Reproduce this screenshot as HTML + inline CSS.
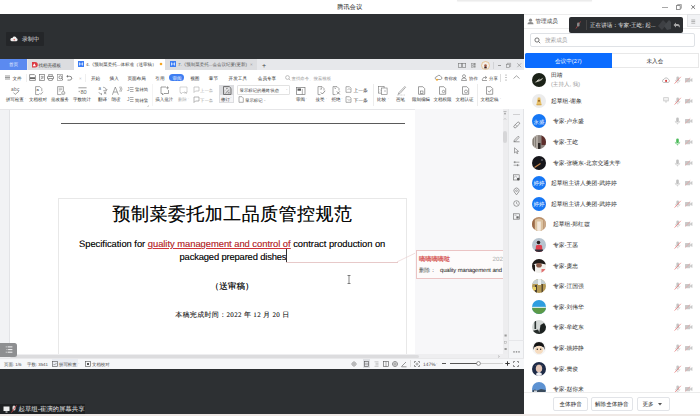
<!DOCTYPE html><html><head><meta charset="utf-8"><style>
*{margin:0;padding:0;box-sizing:border-box}
html,body{width:700px;height:416px;overflow:hidden;background:#fff;font-family:"Liberation Sans",sans-serif}
.ab{position:absolute}
.t{position:absolute;white-space:nowrap;line-height:1;font-weight:500;text-rendering:geometricPrecision}
svg{overflow:visible}
</style></head><body>
<div class="ab" style="left:0px;top:0px;width:700px;height:14px;background:#fff"></div>
<div class="t" style="left:337px;top:5px;font-size:6.3px;height:6.3px;color:#222;">腾讯会议</div>
<div class="ab" style="left:457px;top:0px;width:135px;height:1px;background:#ececec;box-shadow:0 0.6px 1.2px rgba(0,0,0,0.10)"></div>
<div class="ab" style="left:662px;top:6.5px;width:6px;height:0.9px;background:#a8a8a8"></div>
<svg class="ab" style="left:675.8px;top:4px;" width="6" height="6" viewBox="0 0 6 6"><rect x="0.4" y="1.6" width="3.8" height="3.8" fill="none" stroke="#777" stroke-width="0.8"/><path d="M1.6 1.6V0.5H5.4V4.3H4.2" fill="none" stroke="#888" stroke-width="0.7"/></svg>
<svg class="ab" style="left:691px;top:4.7px;" width="4.4" height="4.2" viewBox="0 0 4.4 4.2"><path d="M0.3 0.3L4.1 3.9M4.1 0.3L0.3 3.9" stroke="#555" stroke-width="0.8"/></svg>
<div class="ab" style="left:0px;top:14px;width:524px;height:402px;background:#2d3033"></div>
<div class="ab" style="left:6px;top:32px;width:38px;height:14px;background:#242629;border-radius:1px"></div>
<svg class="ab" style="left:9.5px;top:35px;" width="8" height="7" viewBox="0 0 8 7"><path d="M1.6 6.2H6.4A1.5 1.5 0 0 0 6.6 3.3A2.2 2.2 0 0 0 2.4 3A1.6 1.6 0 0 0 1.6 6.2Z" fill="#f0eeee"/><circle cx="4.3" cy="4.6" r="0.85" fill="#e07878"/></svg>
<div class="t" style="left:22px;top:38px;font-size:5.8px;height:5.8px;color:#e4e4e4;">录制中</div>
<div class="ab" style="left:0px;top:59px;width:524px;height:310px;background:#fff"></div>
<div class="ab" style="left:0px;top:59px;width:524px;height:11px;background:#e7e8eb"></div>
<div class="ab" style="left:0px;top:59px;width:27px;height:11px;background:#5b8af0"></div>
<div class="t" style="left:9px;top:63px;font-size:4.6px;height:4.6px;color:#e8eeff;">首页</div>
<div class="ab" style="left:28px;top:59px;width:46px;height:11px;background:#dcdde0"></div>
<svg class="ab" style="left:31.6px;top:62.4px;" width="6" height="5.6" viewBox="0 0 6 5.6"><path d="M0 0H3A2.8 2.8 0 0 1 3 5.6H0Z" fill="#dc3a42"/><path d="M2.3 1.3L3.9 4.3H0.7Z" fill="#fff"/></svg>
<div class="t" style="left:38.5px;top:64px;font-size:4.5px;height:4.5px;color:#333;">找稻壳模板</div>
<div class="ab" style="left:74px;top:59px;width:91px;height:11px;background:#fff"></div>
<svg class="ab" style="left:78px;top:61px;" width="6" height="6" viewBox="0 0 6 6"><rect width="6" height="6" fill="#3d7ef5"/><path d="M1.5 1.5V4.5M4.5 1.5V4.5M1.5 3H4.5" stroke="#fff" stroke-width="0.7"/></svg>
<div class="t" style="left:86px;top:63px;font-size:4.5px;height:4.5px;color:#333;">4.《预制菜委托...体标准（送审稿）</div>
<svg class="ab" style="left:159px;top:62px;" width="4" height="4" viewBox="0 0 4 4"><circle cx="2" cy="2" r="1.3" fill="#f5a623"/></svg>
<div class="ab" style="left:165px;top:59px;width:92px;height:11px;background:#dcdde0"></div>
<svg class="ab" style="left:170px;top:61px;" width="6" height="6" viewBox="0 0 6 6"><rect width="6" height="6" fill="#3d7ef5"/><path d="M1.5 1.5V4.5M4.5 1.5V4.5M1.5 3H4.5" stroke="#fff" stroke-width="0.7"/></svg>
<div class="t" style="left:178px;top:63px;font-size:4.5px;height:4.5px;color:#555;">7.《预制菜委托...会会议纪要(更新)</div>
<div class="t" style="left:250px;top:63px;font-size:4.5px;height:4.5px;color:#999;">×</div>
<div class="t" style="left:262px;top:63px;font-size:7px;height:7px;color:#444;">+</div>
<svg class="ab" style="left:457.5px;top:62.8px;" width="8" height="5" viewBox="0 0 8 5"><rect x="0.3" y="0.3" width="3.4" height="4.2" fill="none" stroke="#777" stroke-width="0.6"/><rect x="4.3" y="0.3" width="3.4" height="4.2" fill="none" stroke="#777" stroke-width="0.6"/></svg>
<svg class="ab" style="left:470.8px;top:62.8px;" width="5" height="5" viewBox="0 0 5 5"><rect x="0.3" y="0.3" width="1.8" height="1.8" fill="none" stroke="#888" stroke-width="0.5"/><rect x="2.9" y="0.3" width="1.8" height="1.8" fill="none" stroke="#888" stroke-width="0.5"/><rect x="0.3" y="2.9" width="1.8" height="1.8" fill="none" stroke="#888" stroke-width="0.5"/><rect x="2.9" y="2.9" width="1.8" height="1.8" fill="none" stroke="#888" stroke-width="0.5"/></svg>
<svg class="ab" style="left:480.5px;top:60.5px;" width="9" height="9" viewBox="0 0 9 9"><circle cx="4.5" cy="4.5" r="4" fill="#f4efe9" stroke="#e2b476" stroke-width="0.7"/><circle cx="4.5" cy="4.6" r="1.3" fill="#a86048"/><rect x="3.3" y="5.6" width="2.4" height="1.8" fill="#3a2020"/></svg>
<div class="ab" style="left:493px;top:61.5px;width:0.5px;height:7px;background:#d2d3d6"></div>
<div class="ab" style="left:497.5px;top:64.8px;width:3px;height:0.6px;background:#999"></div>
<svg class="ab" style="left:506px;top:62.5px;" width="5" height="5" viewBox="0 0 5 5"><rect x="0.3" y="1.3" width="3.2" height="3.2" fill="none" stroke="#888" stroke-width="0.6"/><path d="M1.3 1.3V0.3H4.6V3.6H3.5" fill="none" stroke="#888" stroke-width="0.6"/></svg>
<svg class="ab" style="left:516.8px;top:62.6px;" width="4.5" height="4.5" viewBox="0 0 4.5 4.5"><path d="M0.3 0.3L4.2 4.2M4.2 0.3L0.3 4.2" stroke="#888" stroke-width="0.6"/></svg>
<svg class="ab" style="left:5px;top:75px;" width="5" height="5" viewBox="0 0 5 5"><path d="M0 1H5M0 2.5H5M0 4H5" stroke="#555" stroke-width="0.6"/></svg>
<div class="t" style="left:12.5px;top:77px;font-size:4.6px;height:4.6px;color:#222;">文件</div>
<div class="ab" style="left:25.5px;top:73.5px;width:0.5px;height:8px;background:#efefef"></div>
<svg class="ab" style="left:28.8px;top:74px;" width="7" height="7" viewBox="0 0 7 7"><path d="M0.6 0.6H5.4L6.4 1.6V6.4H0.6Z" fill="none" stroke="#666" stroke-width="0.7"/><rect x="1" y="3.3" width="5" height="1.6" fill="#555"/></svg>
<svg class="ab" style="left:38.5px;top:74px;" width="7" height="7" viewBox="0 0 7 7"><rect x="0.6" y="0.6" width="5" height="5.8" fill="none" stroke="#777" stroke-width="0.7"/><path d="M1.8 2.4H4.5M1.8 4H4.5" stroke="#666" stroke-width="0.6"/><path d="M1.5 5.5L4.5 3" stroke="#666" stroke-width="0.5"/></svg>
<svg class="ab" style="left:46.8px;top:74px;" width="7" height="7" viewBox="0 0 7 7"><rect x="0.5" y="2.3" width="6" height="2.8" rx="0.8" fill="none" stroke="#666" stroke-width="0.8"/><rect x="1.8" y="0.6" width="3.4" height="1.7" fill="none" stroke="#777" stroke-width="0.6"/><rect x="1.8" y="4.5" width="3.4" height="2" fill="#fff" stroke="#666" stroke-width="0.6"/></svg>
<svg class="ab" style="left:56.5px;top:74px;" width="7" height="7" viewBox="0 0 7 7"><rect x="0.6" y="0.6" width="4.8" height="5.8" fill="none" stroke="#888" stroke-width="0.6"/><circle cx="3.4" cy="3.3" r="1.5" fill="none" stroke="#555" stroke-width="0.6"/><path d="M4.4 4.4L5.8 5.8" stroke="#555" stroke-width="0.6"/></svg>
<svg class="ab" style="left:65.5px;top:74px;" width="7" height="7" viewBox="0 0 7 7"><path d="M1.2 2.3H3.8A1.9 1.9 0 0 1 3.8 6.1H1.5" fill="none" stroke="#666" stroke-width="0.75"/><path d="M0.3 2.3L1.9 0.9V3.7Z" fill="#666"/></svg>
<div class="t" style="left:72px;top:77px;font-size:4.6px;height:4.6px;color:#888;">·</div>
<div class="t" style="left:79px;top:77px;font-size:4.6px;height:4.6px;color:#bbb;">×</div>
<div class="ab" style="left:85px;top:73.5px;width:0.5px;height:8px;background:#efefef"></div>
<div class="t" style="left:91px;top:77px;font-size:4.6px;height:4.6px;color:#222;">开始</div>
<div class="t" style="left:109.6px;top:77px;font-size:4.6px;height:4.6px;color:#222;">插入</div>
<div class="t" style="left:127.4px;top:77px;font-size:4.6px;height:4.6px;color:#222;">页面布局</div>
<div class="t" style="left:155.3px;top:77px;font-size:4.6px;height:4.6px;color:#222;">引用</div>
<div class="t" style="left:190.2px;top:77px;font-size:4.6px;height:4.6px;color:#222;">视图</div>
<div class="t" style="left:208.8px;top:77px;font-size:4.6px;height:4.6px;color:#222;">章节</div>
<div class="t" style="left:228.6px;top:77px;font-size:4.6px;height:4.6px;color:#222;">开发工具</div>
<div class="t" style="left:257.8px;top:77px;font-size:4.6px;height:4.6px;color:#222;">会员专享</div>
<div class="ab" style="left:168.6px;top:74px;width:15.8px;height:7.4px;background:#3f7ef2;border-radius:3.7px"></div>
<div class="t" style="left:172.6px;top:77px;font-size:4.5px;height:4.5px;color:#fff;">审阅</div>
<svg class="ab" style="left:285px;top:74.8px;" width="6" height="6" viewBox="0 0 6 6"><circle cx="2.5" cy="2.5" r="1.9" fill="none" stroke="#999" stroke-width="0.6"/><path d="M3.9 3.9L5.3 5.3" stroke="#999" stroke-width="0.6"/></svg>
<div class="t" style="left:291.5px;top:77px;font-size:4.4px;height:4.4px;color:#9a9a9a;">查找命令、搜索模板</div>
<svg class="ab" style="left:435px;top:74px;" width="7" height="7" viewBox="0 0 7 7"><path d="M1.2 5.5H5.8A1.5 1.5 0 0 0 5.8 2.6A2 2 0 0 0 2 2.8A1.4 1.4 0 0 0 1.2 5.5Z" fill="none" stroke="#666" stroke-width="0.6"/><circle cx="2" cy="5.8" r="1" fill="#f5a623"/></svg>
<div class="t" style="left:444px;top:77px;font-size:4.4px;height:4.4px;color:#333;">有你改</div>
<svg class="ab" style="left:461px;top:74px;" width="6" height="7" viewBox="0 0 6 7"><circle cx="3" cy="2.2" r="1.5" fill="none" stroke="#666" stroke-width="0.6"/><path d="M0.5 6.5A2.5 2.5 0 0 1 5.5 6.5Z" fill="none" stroke="#666" stroke-width="0.6"/></svg>
<div class="t" style="left:469px;top:77px;font-size:4.4px;height:4.4px;color:#333;">协作</div>
<svg class="ab" style="left:481px;top:74px;" width="7" height="7" viewBox="0 0 7 7"><path d="M1 6L2.5 3.5H5.5M4 2L5.8 3.5L4 5M1 6.5H6" fill="none" stroke="#666" stroke-width="0.6"/></svg>
<div class="t" style="left:489px;top:77px;font-size:4.4px;height:4.4px;color:#333;">分享</div>
<div class="ab" style="left:500px;top:73.5px;width:0.5px;height:8px;background:#ddd"></div>
<svg class="ab" style="left:505px;top:74px;" width="2" height="7" viewBox="0 0 2 7"><circle cx="1" cy="1" r="0.5" fill="#666"/><circle cx="1" cy="3.5" r="0.5" fill="#666"/><circle cx="1" cy="6" r="0.5" fill="#666"/></svg>
<svg class="ab" style="left:513px;top:75px;" width="7" height="4" viewBox="0 0 7 4"><path d="M0.5 3.5L3.5 0.8L6.5 3.5" fill="none" stroke="#666" stroke-width="0.6"/></svg>
<svg class="ab" style="left:10.5px;top:85.5px;" width="10" height="10" viewBox="0 0 10 10"><text x="0" y="4.6" font-size="4.8" fill="#6a6a6a" font-family="Liberation Sans" textLength="8.5">abc</text><path d="M2.5 6.6L4.2 8.4L8 5.2" fill="none" stroke="#6a6a6a" stroke-width="0.65"/></svg>
<div class="t" style="left:5.800000000000001px;top:98px;font-size:4.5px;height:4.5px;color:#2a2a2a;">拼写检查</div>
<div class="t" style="left:25px;top:98px;font-size:4px;height:4px;color:#999;">˙</div>
<svg class="ab" style="left:34.5px;top:86px;" width="9" height="9.5" viewBox="0 0 9 9.5"><path d="M0.6 0.6H4.8L6.8 2.6V5.2M4.2 8.6H0.6V0.6" fill="none" stroke="#767676" stroke-width="0.65"/><text x="1.6" y="5.3" font-size="4.2" fill="#666" font-family="Liberation Sans" font-weight="bold">a</text><path d="M4.5 7L5.8 8.4L8 5.8" fill="none" stroke="#767676" stroke-width="0.6"/></svg>
<div class="t" style="left:29.0px;top:98px;font-size:4.5px;height:4.5px;color:#2a2a2a;">文档校对</div>
<svg class="ab" style="left:56.5px;top:86px;" width="9" height="9.5" viewBox="0 0 9 9.5"><path d="M0.6 0.6H6.4V5M4.5 8.6H0.6V0.6" fill="none" stroke="#767676" stroke-width="0.65"/><path d="M1.8 2.2H5.2M1.8 3.6H5.2M1.8 5H3.5" stroke="#777" stroke-width="0.5"/><circle cx="6.3" cy="7" r="1.6" fill="none" stroke="#767676" stroke-width="0.6"/><path d="M5.6 7L6.2 7.6L7.1 6.5" fill="none" stroke="#767676" stroke-width="0.45"/></svg>
<div class="t" style="left:51.0px;top:98px;font-size:4.5px;height:4.5px;color:#2a2a2a;">批改服务</div>
<svg class="ab" style="left:77.5px;top:86.5px;" width="9" height="8" viewBox="0 0 9 8"><path d="M0.4 0.8H8.6" stroke="#767676" stroke-width="0.7"/><rect x="0.6" y="3.8" width="1.3" height="1.3" fill="#aaa"/><text x="2.6" y="7.3" font-size="5.6" fill="#6a6a6a" font-family="Liberation Sans" textLength="6">80</text></svg>
<div class="t" style="left:73.0px;top:98px;font-size:4.5px;height:4.5px;color:#2a2a2a;">字数统计</div>
<svg class="ab" style="left:97.5px;top:86px;" width="10" height="9" viewBox="0 0 10 9"><text x="0.5" y="4.3" font-size="4.5" fill="#6a6a6a" font-family="Liberation Sans">a</text><path d="M5 1.2Q7.8 1.2 8.5 3.8M7.4 3.2L8.5 4.2L9.3 3" fill="none" stroke="#767676" stroke-width="0.55"/><path d="M5.2 4.6H9M7.1 4.6V8.2M5.8 6L8.4 7.8M8.4 6L5.8 7.8" stroke="#767676" stroke-width="0.5"/><path d="M0.8 6Q1.2 8.2 4 8.2M3 7.4L4 8.2L3 9" fill="none" stroke="#767676" stroke-width="0.55"/></svg>
<div class="t" style="left:98.0px;top:98px;font-size:4.5px;height:4.5px;color:#2a2a2a;">翻译</div>
<div class="t" style="left:108px;top:98px;font-size:4px;height:4px;color:#999;">˙</div>
<svg class="ab" style="left:111.5px;top:85.5px;" width="11" height="9.5" viewBox="0 0 11 9.5"><path d="M0.4 8.8L3.3 1L6.4 8.8M1.6 6H5.2" fill="none" stroke="#767676" stroke-width="0.65"/><path d="M7.6 0.8Q9.6 3 7.6 5.4M8.8 0.4Q11.2 3 8.8 6" fill="none" stroke="#767676" stroke-width="0.55"/></svg>
<div class="t" style="left:111.5px;top:98px;font-size:4.5px;height:4.5px;color:#2a2a2a;">朗读</div>
<svg class="ab" style="left:127px;top:85.5px;" width="7" height="7" viewBox="0 0 7 7"><text x="0" y="5" font-size="5" fill="#767676" font-family="Liberation Sans">J</text><path d="M3 1.5H6.5M3 3.5H6.5M3 5.5H6.5" stroke="#767676" stroke-width="0.6"/></svg>
<div class="t" style="left:135px;top:88px;font-size:4.4px;height:4.4px;color:#333;">繁转简</div>
<svg class="ab" style="left:127px;top:96px;" width="7" height="7" viewBox="0 0 7 7"><text x="0" y="5" font-size="5" fill="#767676" font-family="Liberation Sans">J</text><path d="M3 1.5H6.5M3 3.5H6.5M3 5.5H6.5" stroke="#767676" stroke-width="0.6"/></svg>
<div class="t" style="left:135px;top:99px;font-size:4.4px;height:4.4px;color:#333;">简转繁</div>
<svg class="ab" style="left:147px;top:104.5px;" width="2" height="2" viewBox="0 0 2 2"><path d="M1.5 0V1.5H0" fill="none" stroke="#aaa" stroke-width="0.4"/></svg>
<div class="ab" style="left:151.5px;top:84px;width:0.5px;height:22px;background:#f4f4f4"></div>
<svg class="ab" style="left:159.5px;top:85.5px;" width="10" height="10" viewBox="0 0 10 10"><path d="M6 1H1V7.5H2.5V9L4 7.5H8.5V4" fill="none" stroke="#767676" stroke-width="0.7"/><path d="M7.5 0.3V3.3M6 1.8H9" stroke="#767676" stroke-width="0.6"/></svg>
<div class="t" style="left:155.3px;top:98px;font-size:4.5px;height:4.5px;color:#2a2a2a;">插入批注</div>
<svg class="ab" style="left:178.5px;top:86px;" width="9" height="9" viewBox="0 0 9 9"><path d="M1 1H8V6.5H3.5L2 8V6.5H1Z" fill="none" stroke="#b8b8b8" stroke-width="0.6"/><path d="M5.5 5.5L8 8M8 5.5L5.5 8" stroke="#b8b8b8" stroke-width="0.6"/></svg>
<div class="t" style="left:178.1px;top:98px;font-size:4.4px;height:4.4px;color:#aaa;">删除</div>
<div class="t" style="left:188px;top:98px;font-size:4px;height:4px;color:#bbb;">˙</div>
<svg class="ab" style="left:192.5px;top:86px;" width="7" height="7" viewBox="0 0 7 7"><path d="M1 1H6V5H2.5L1 6.5Z" fill="none" stroke="#aaa" stroke-width="0.6"/></svg>
<div class="t" style="left:200px;top:89px;font-size:4.4px;height:4.4px;color:#aaa;">上一条</div>
<svg class="ab" style="left:192.5px;top:96px;" width="7" height="7" viewBox="0 0 7 7"><path d="M1 1H6V5H2.5L1 6.5Z" fill="none" stroke="#888" stroke-width="0.6"/></svg>
<div class="t" style="left:200px;top:99px;font-size:4.4px;height:4.4px;color:#999;">下一条</div>
<div class="ab" style="left:218.8px;top:85px;width:15.6px;height:17.7px;background:#f4f4f6;border:0.6px solid #dcdde0"></div>
<div class="ab" style="left:218.8px;top:85px;width:15.6px;height:10.2px;background:#dcdde0"></div>
<svg class="ab" style="left:222.8px;top:85.9px;" width="8.5" height="9" viewBox="0 0 8.5 9"><path d="M0.5 0.5H6.2L8 2.3V8.5H0.5Z" fill="#d4d4d6" stroke="#6a6a6a" stroke-width="0.9"/><path d="M2 2V3.6M2 6.5L6.3 2.3" stroke="#fff" stroke-width="1"/><path d="M2.4 7.2L5.8 3.8M3.2 2.4H4.6M5 6.8H6.6" stroke="#666" stroke-width="0.7"/></svg>
<div class="t" style="left:221px;top:98px;font-size:4.4px;height:4.4px;color:#333;">修订</div>
<div class="t" style="left:230.5px;top:97px;font-size:4px;height:4px;color:#888;">˙</div>
<div class="ab" style="left:237.4px;top:85px;width:52.6px;height:9.6px;background:#fff;border:0.6px solid #e2e2e2;border-radius:1px"></div>
<div class="t" style="left:239.5px;top:89px;font-size:4.4px;height:4.4px;color:#333;">显示标记的最终状态</div>
<div class="t" style="left:286px;top:88px;font-size:4.4px;height:4.4px;color:#555;">·</div>
<svg class="ab" style="left:238px;top:96px;" width="6" height="7" viewBox="0 0 6 7"><path d="M1 0.7H4L5.3 2V6.3H1Z" fill="none" stroke="#767676" stroke-width="0.6"/></svg>
<div class="t" style="left:245px;top:99px;font-size:4.4px;height:4.4px;color:#333;">显示标记</div>
<div class="t" style="left:264px;top:99px;font-size:4.4px;height:4.4px;color:#777;">-</div>
<svg class="ab" style="left:295.8px;top:86.5px;" width="10" height="8" viewBox="0 0 10 8"><rect x="0.5" y="0.5" width="8.5" height="7" fill="none" stroke="#767676" stroke-width="0.7"/><rect x="1.5" y="1.5" width="3.5" height="2.2" fill="#555"/><path d="M6.3 2V7.5" stroke="#767676" stroke-width="0.6"/></svg>
<div class="t" style="left:296.0px;top:98px;font-size:4.5px;height:4.5px;color:#2a2a2a;">审阅</div>
<div class="t" style="left:306px;top:98px;font-size:4px;height:4px;color:#888;">˙</div>
<svg class="ab" style="left:316.5px;top:86px;" width="9" height="9.5" viewBox="0 0 9 9.5"><path d="M1 0.6H5L7 2.6V4.5M3.5 8.6H1V0.6" fill="none" stroke="#767676" stroke-width="0.65"/><path d="M4.2 1.2L4.6 3.2L2.8 3" fill="none" stroke="#666" stroke-width="0.5"/><path d="M3.8 6.4L5.3 8L8.2 4.8" fill="none" stroke="#666" stroke-width="0.7"/></svg>
<div class="t" style="left:315.5px;top:98px;font-size:4.5px;height:4.5px;color:#2a2a2a;">接受</div>
<div class="t" style="left:326px;top:98px;font-size:4px;height:4px;color:#888;">˙</div>
<svg class="ab" style="left:331.5px;top:86px;" width="9" height="9.5" viewBox="0 0 9 9.5"><path d="M1 0.6H5L7 2.6V4.5M3.5 8.6H1V0.6" fill="none" stroke="#767676" stroke-width="0.65"/><path d="M2.5 1.5L4 3M4 1.5L2.5 3" stroke="#777" stroke-width="0.45"/><path d="M4.8 5.4L7.8 8.4M7.8 5.4L4.8 8.4" fill="none" stroke="#666" stroke-width="0.7"/></svg>
<div class="t" style="left:331.5px;top:98px;font-size:4.5px;height:4.5px;color:#2a2a2a;">拒绝</div>
<div class="t" style="left:341.5px;top:98px;font-size:4px;height:4px;color:#888;">˙</div>
<svg class="ab" style="left:344.5px;top:85.5px;" width="8" height="7" viewBox="0 0 8 7"><path d="M1 0.7H4.5L6 2.2V6.3H1Z" fill="none" stroke="#767676" stroke-width="0.6"/><path d="M2.5 4L4 2.5L5.5 4" fill="none" stroke="#767676" stroke-width="0.5"/></svg>
<div class="t" style="left:353.5px;top:90px;font-size:4.8px;height:4.8px;color:#2e2e2e;">上一条</div>
<svg class="ab" style="left:344.5px;top:96px;" width="8" height="7" viewBox="0 0 8 7"><path d="M1 0.7H4.5L6 2.2V6.3H1Z" fill="none" stroke="#767676" stroke-width="0.6"/><path d="M2.5 3L4 4.5L5.5 3" fill="none" stroke="#767676" stroke-width="0.5"/></svg>
<div class="t" style="left:353.5px;top:100px;font-size:4.8px;height:4.8px;color:#2e2e2e;">下一条</div>
<div class="ab" style="left:373px;top:84px;width:0.5px;height:22px;background:#ececec"></div>
<svg class="ab" style="left:377.5px;top:86px;" width="10" height="9" viewBox="0 0 10 9"><rect x="0.6" y="0.6" width="5.5" height="6.5" fill="none" stroke="#767676" stroke-width="0.6"/><rect x="3.6" y="2" width="5.5" height="6.5" fill="#fff" stroke="#767676" stroke-width="0.6"/><path d="M2 3.5L3 4.5L2 5.5M7.5 4L6.5 5L7.5 6" fill="none" stroke="#767676" stroke-width="0.5"/></svg>
<div class="t" style="left:377.0px;top:98px;font-size:4.5px;height:4.5px;color:#2a2a2a;">比较</div>
<div class="t" style="left:388px;top:98px;font-size:4px;height:4px;color:#888;">˙</div>
<svg class="ab" style="left:395.5px;top:85.5px;" width="10" height="10" viewBox="0 0 10 10"><path d="M8.8 0.5L3 6.5L2.2 8.3L4 7.5L9.6 1.3Z" fill="none" stroke="#767676" stroke-width="0.6"/><path d="M1 9H9" stroke="#999" stroke-width="0.5" stroke-dasharray="0.8 0.6"/></svg>
<div class="t" style="left:396.0px;top:98px;font-size:4.5px;height:4.5px;color:#2a2a2a;">画笔</div>
<svg class="ab" style="left:416.5px;top:86px;" width="9" height="9" viewBox="0 0 9 9"><path d="M1.5 0.7H5.8L7.7 2.6V8.3H1.5Z" fill="none" stroke="#767676" stroke-width="0.7"/><rect x="3.5" y="5" width="2.5" height="2.3" fill="none" stroke="#555" stroke-width="0.5"/></svg>
<div class="t" style="left:412.0px;top:98px;font-size:4.5px;height:4.5px;color:#2a2a2a;">限制编辑</div>
<svg class="ab" style="left:438.0px;top:86px;" width="9" height="9" viewBox="0 0 9 9"><path d="M1.5 0.7H5.8L7.7 2.6V8.3H1.5Z" fill="none" stroke="#767676" stroke-width="0.7"/><circle cx="5.5" cy="5.5" r="1.2" fill="none" stroke="#555" stroke-width="0.5"/></svg>
<div class="t" style="left:433.5px;top:98px;font-size:4.5px;height:4.5px;color:#2a2a2a;">文档权限</div>
<svg class="ab" style="left:460.5px;top:86px;" width="9" height="9" viewBox="0 0 9 9"><path d="M1.5 0.7H5.8L7.7 2.6V8.3H1.5Z" fill="none" stroke="#767676" stroke-width="0.7"/><circle cx="5" cy="5.5" r="1.5" fill="none" stroke="#555" stroke-width="0.5"/></svg>
<div class="t" style="left:455.5px;top:98px;font-size:4.5px;height:4.5px;color:#2a2a2a;">文档认证</div>
<div class="ab" style="left:477px;top:84px;width:0.5px;height:22px;background:#ececec"></div>
<svg class="ab" style="left:485.0px;top:86px;" width="9" height="9" viewBox="0 0 9 9"><path d="M1.5 0.7H5.8L7.7 2.6V8.3H1.5Z" fill="none" stroke="#767676" stroke-width="0.7"/><path d="M3 4.8L4.4 6.2L6.5 3.5" fill="none" stroke="#555" stroke-width="0.6"/></svg>
<div class="t" style="left:480.5px;top:98px;font-size:4.5px;height:4.5px;color:#2a2a2a;">文档定稿</div>
<div class="t" style="left:500px;top:98px;font-size:4px;height:4px;color:#888;">˙</div>
<div class="ab" style="left:0px;top:108.8px;width:524px;height:0.9px;background:#e6e6e8"></div>
<div class="ab" style="left:0px;top:109.7px;width:10px;height:245px;background:#f1f2f4"></div>
<div class="ab" style="left:9px;top:109.7px;width:1px;height:245px;background:#e2e3e6"></div>
<div class="ab" style="left:10px;top:109.7px;width:405px;height:245px;background:#fff"></div>
<div class="ab" style="left:61px;top:123px;width:343.5px;height:0.9px;background:#5a5a5a"></div>
<div class="ab" style="left:58px;top:198px;width:348.6px;height:0.8px;background:#e8e8e8"></div>
<div class="ab" style="left:58px;top:198px;width:0.8px;height:156px;background:#e8e8e8"></div>
<div class="ab" style="left:405.8px;top:198px;width:0.8px;height:156px;background:#e8e8e8"></div>
<div class="t" style="left:112.5px;top:205px;font-size:18px;height:18px;color:#0a0a0a;letter-spacing:0.45px;text-shadow:0 0 0.4px rgba(0,0,0,0.6)">预制菜委托加工品质管控规范</div>
<div class="t" style="left:79px;top:239px;font-size:9.4px;height:9.4px;color:#111;letter-spacing:-0.03px;text-shadow:0 0 0.3px rgba(0,0,0,0.5)">Specification for <span style="color:#d03438;text-decoration:underline">quality management and control of</span> contract production on</div>
<div class="t" style="left:179.5px;top:252px;font-size:9.4px;height:9.4px;color:#111;letter-spacing:-0.15px;text-shadow:0 0 0.3px rgba(0,0,0,0.5)">packaged prepared dishes</div>
<div class="ab" style="left:285.5px;top:249px;width:0.6px;height:13px;background:#333"></div>
<div class="ab" style="left:285.5px;top:261.6px;width:112px;height:0.6px;background:#e7c9c9"></div>
<svg class="ab" style="left:397px;top:252px;" width="19" height="11" viewBox="0 0 19 11"><path d="M0 9.9L18.5 1" stroke="#e7c9c9" stroke-width="0.6"/></svg>
<div class="t" style="left:210.6px;top:282px;font-size:8.65px;height:8.65px;color:#111;font-weight:500;text-shadow:0 0 0.4px rgba(0,0,0,0.7)">（送审稿）</div>
<div class="t" style="left:175.2px;top:312px;font-size:7px;height:7px;color:#222;font-family:'Liberation Serif',serif;letter-spacing:0.33px;text-shadow:0 0 0.3px rgba(0,0,0,0.4)">本稿完成时间：2022 年 12 月 20 日</div>
<svg class="ab" style="left:347px;top:275px;" width="4" height="9" viewBox="0 0 4 9"><path d="M0.5 0.5H3.5M2 0.5V8.5M0.5 8.5H3.5" stroke="#333" stroke-width="0.6"/></svg>
<div class="ab" style="left:415px;top:109.4px;width:87.5px;height:245px;background:#f7f7f9"></div>
<div class="ab" style="left:415.6px;top:250.4px;width:87px;height:29px;background:#fdfbfb;border:0.6px solid #ebc4c4;border-right:none"></div>
<div class="t" style="left:419px;top:257px;font-size:6.2px;height:6.2px;color:#d65858;font-weight:700">嘀嘀嘀嘀哒</div>
<div class="t" style="left:492.5px;top:257px;font-size:6.2px;height:6.2px;color:#aaa;">2022</div>
<div class="t" style="left:419px;top:269px;font-size:5.6px;height:5.6px;color:#555;">删除：</div>
<div class="t" style="left:440px;top:269px;font-size:5.9px;height:5.9px;color:#1a1a1a;letter-spacing:-0.12px">quality management and</div>
<div class="ab" style="left:502.5px;top:109.4px;width:5px;height:245px;background:#ededef"></div>
<svg class="ab" style="left:503px;top:111px;" width="4" height="6" viewBox="0 0 4 6"><path d="M0.5 0.5H3.5M2 1.5V4M1 3L2 2L3 3" stroke="#888" stroke-width="0.5" fill="none"/></svg>
<svg class="ab" style="left:503px;top:117px;" width="4" height="4" viewBox="0 0 4 4"><path d="M1 2.5L2 1.5L3 2.5" stroke="#888" stroke-width="0.5" fill="none"/></svg>
<div class="ab" style="left:503px;top:131px;width:4px;height:11.5px;background:#d6d6d8;border-radius:2px"></div>
<svg class="ab" style="left:503.5px;top:334px;" width="4" height="17" viewBox="0 0 4 17"><rect x="0.5" y="0.5" width="2.2" height="2" fill="#999"/><rect x="0.5" y="7.3" width="2.2" height="2" fill="none" stroke="#aaa" stroke-width="0.5"/><rect x="0.5" y="14" width="2.2" height="2" fill="#999"/></svg>
<div class="ab" style="left:508px;top:109.4px;width:16px;height:259.6px;background:#f4f5f7;border-left:0.6px solid #e6e7e9;border-right:0.6px solid #e3e4e7"></div>
<div class="ab" style="left:512.5px;top:113.5px;width:7px;height:0.7px;background:#d0d0d2"></div>
<svg class="ab" style="left:512.5px;top:121.4px;" width="7" height="7" viewBox="0 0 7 7"><path d="M1.2 4.8L4.6 1.3A1.3 1.3 0 0 1 6.4 3.1L2.9 6.5A1.2 1.2 0 0 1 1.2 4.8Z" fill="none" stroke="#707070" stroke-width="0.7"/><path d="M2.3 3.7L4 5.4" stroke="#707070" stroke-width="0.6"/></svg>
<svg class="ab" style="left:512.5px;top:134.7px;" width="7" height="7" viewBox="0 0 7 7"><path d="M1.3 5.2L5.2 1.2L6.3 2.3L2.4 6.2L1 6.5Z" fill="none" stroke="#707070" stroke-width="0.65"/><path d="M0.6 6.8H6.6" stroke="#707070" stroke-width="0.65"/></svg>
<svg class="ab" style="left:512.5px;top:147.3px;" width="7" height="7" viewBox="0 0 7 7"><path d="M1.5 0.8V6L2.9 4.8L4 6.8L4.8 6.4L3.8 4.4H5.6Z" fill="none" stroke="#707070" stroke-width="0.6"/></svg>
<svg class="ab" style="left:512.5px;top:160.1px;" width="7" height="7" viewBox="0 0 7 7"><path d="M0.6 2.2H6.4M0.6 5.2H6.4" stroke="#707070" stroke-width="0.6"/><path d="M1.8 1.2V3.2M4.6 4.2V6.2" stroke="#707070" stroke-width="0.8"/></svg>
<svg class="ab" style="left:512.5px;top:174.0px;" width="7" height="7" viewBox="0 0 7 7"><rect x="0.6" y="0.8" width="5.6" height="5.2" fill="none" stroke="#707070" stroke-width="0.65"/><path d="M0.6 3.6L2.6 2.2L4 3.4" fill="none" stroke="#707070" stroke-width="0.5"/><circle cx="5.2" cy="5.1" r="1.3" fill="#555"/></svg>
<svg class="ab" style="left:512.5px;top:187.5px;" width="7" height="7" viewBox="0 0 7 7"><path d="M3.5 6.8L1.3 4A2.6 2.6 0 1 1 5.7 4Z" fill="none" stroke="#707070" stroke-width="0.65"/><circle cx="3.5" cy="2.7" r="0.9" fill="none" stroke="#707070" stroke-width="0.55"/></svg>
<svg class="ab" style="left:512.5px;top:199.9px;" width="7" height="7" viewBox="0 0 7 7"><circle cx="3.5" cy="3.5" r="2.8" fill="none" stroke="#707070" stroke-width="0.65"/><path d="M3.5 1.8V3.5L4.8 4.4" fill="none" stroke="#707070" stroke-width="0.55"/></svg>
<svg class="ab" style="left:512.5px;top:212.7px;" width="7" height="7" viewBox="0 0 7 7"><rect x="0.6" y="0.8" width="5.8" height="5.4" fill="none" stroke="#707070" stroke-width="0.65"/><rect x="3.4" y="3.3" width="2.3" height="2.2" fill="#666"/><path d="M1.5 2.2H3.5" stroke="#707070" stroke-width="0.5"/></svg>
<svg class="ab" style="left:512.5px;top:351.2px;" width="7" height="2" viewBox="0 0 7 2"><rect x="0.3" y="0.3" width="1.4" height="1.2" fill="#777"/><rect x="2.8" y="0.3" width="1.4" height="1.2" fill="#777"/><rect x="5.3" y="0.3" width="1.4" height="1.2" fill="#777"/></svg>
<div class="ab" style="left:509px;top:340px;width:15px;height:0.6px;background:#e6e7ea"></div>
<div class="ab" style="left:0px;top:353.6px;width:508px;height:4.2px;background:#eeeef0"></div>
<div class="ab" style="left:10px;top:354.6px;width:409px;height:3px;background:#dcdcde;border-radius:1.5px"></div>
<svg class="ab" style="left:497px;top:354.5px;" width="4" height="3" viewBox="0 0 4 3"><path d="M1 0.5L2.5 1.5L1 2.5" stroke="#999" stroke-width="0.5" fill="none"/></svg>
<div class="ab" style="left:0px;top:342.8px;width:17px;height:13.8px;background:#8e8f91;border-radius:0 2.5px 2.5px 0"></div>
<svg class="ab" style="left:4.5px;top:346px;" width="8" height="7" viewBox="0 0 8 7"><path d="M0.8 0.9H1.6M2.6 0.9H7.4M1.6 3.6H2.3M3.1 3.6H7.4M0.8 6.2H1.6M2.6 6.2H7.4" stroke="#fff" stroke-width="0.9"/></svg>
<div class="ab" style="left:0px;top:357.8px;width:524px;height:11.2px;background:#f6f7f9;border-top:0.5px solid #e8e8ea"></div>
<div class="t" style="left:4px;top:363px;font-size:4.4px;height:4.4px;color:#444;">页面: 1/6</div>
<div class="t" style="left:27px;top:363px;font-size:4.4px;height:4.4px;color:#444;">字数: 3541</div>
<svg class="ab" style="left:52px;top:360.5px;" width="6" height="6" viewBox="0 0 6 6"><rect x="0.5" y="0.5" width="5" height="5" fill="none" stroke="#555" stroke-width="0.6"/><path d="M1.5 3L2.5 4L4.5 2" stroke="#555" stroke-width="0.5" fill="none"/></svg>
<div class="ab" style="left:51.5px;top:359.3px;width:26px;height:8px;background:#e9ecf2"></div>
<svg class="ab" style="left:52px;top:360.5px;" width="6" height="6" viewBox="0 0 6 6"><rect x="0.5" y="0.5" width="5" height="5" fill="none" stroke="#555" stroke-width="0.6"/><path d="M1.5 3L2.5 4L4.5 2" stroke="#555" stroke-width="0.5" fill="none"/></svg>
<div class="t" style="left:59px;top:363px;font-size:4.4px;height:4.4px;color:#444;">拼写检查</div>
<div class="t" style="left:78px;top:362px;font-size:4.4px;height:4.4px;color:#888;">·</div>
<svg class="ab" style="left:84.5px;top:360.5px;" width="6" height="6" viewBox="0 0 6 6"><rect x="0.5" y="0.5" width="5" height="5" fill="none" stroke="#555" stroke-width="0.6"/><rect x="2" y="2" width="2" height="2" fill="#555"/></svg>
<div class="t" style="left:92px;top:363px;font-size:4.4px;height:4.4px;color:#444;">文档校对</div>
<div class="ab" style="left:362.5px;top:359px;width:7px;height:9px;background:#dfe1e5"></div>
<svg class="ab" style="left:350.5px;top:360.5px;" width="6" height="6" viewBox="0 0 6 6"><circle cx="3" cy="3" r="1.3" fill="none" stroke="#555" stroke-width="0.6"/><path d="M3 0V1M3 5V6M0 3H1M5 3H6M1 1L1.7 1.7M4.3 4.3L5 5M5 1L4.3 1.7M1.7 4.3L1 5" stroke="#555" stroke-width="0.5"/></svg>
<svg class="ab" style="left:363.5px;top:360.5px;" width="5" height="6" viewBox="0 0 5 6"><rect x="0.5" y="0.5" width="4" height="5" fill="none" stroke="#555" stroke-width="0.6"/><path d="M0.5 3H4.5" stroke="#555" stroke-width="0.5"/></svg>
<svg class="ab" style="left:373.5px;top:360.5px;" width="5" height="6" viewBox="0 0 5 6"><path d="M0.5 0.8H4.5M1.5 2.3H4.5M1.5 3.8H4.5M0.5 5.3H4.5" stroke="#999" stroke-width="0.5"/></svg>
<svg class="ab" style="left:382.5px;top:360.5px;" width="6" height="6" viewBox="0 0 6 6"><rect x="0.5" y="0.5" width="5" height="5" fill="none" stroke="#555" stroke-width="0.6"/><path d="M3 0.5V5.5" stroke="#555" stroke-width="0.5"/></svg>
<svg class="ab" style="left:391.6px;top:360.5px;" width="6" height="6" viewBox="0 0 6 6"><circle cx="3" cy="3" r="2.5" fill="none" stroke="#555" stroke-width="0.6"/><path d="M0.5 3H5.5M3 0.5V5.5" stroke="#555" stroke-width="0.5"/></svg>
<svg class="ab" style="left:401px;top:360.5px;" width="6" height="6" viewBox="0 0 6 6"><path d="M0.5 5.5L5 1M0.5 5.8H5.5" stroke="#555" stroke-width="0.6" fill="none"/></svg>
<div class="ab" style="left:410px;top:359.5px;width:0.5px;height:7px;background:#ddd"></div>
<svg class="ab" style="left:414px;top:360.5px;" width="6" height="6" viewBox="0 0 6 6"><path d="M0.5 2V0.5H2M4 0.5H5.5V2M5.5 4V5.5H4M2 5.5H0.5V4" stroke="#555" stroke-width="0.6" fill="none"/><circle cx="3" cy="3" r="1" fill="none" stroke="#555" stroke-width="0.5"/></svg>
<div class="t" style="left:423px;top:364px;font-size:4.9px;height:4.9px;color:#444;">147%</div>
<div class="t" style="left:436px;top:362px;font-size:4.4px;height:4.4px;color:#888;">·</div>
<div class="ab" style="left:442px;top:363px;width:4px;height:0.7px;background:#555"></div>
<div class="ab" style="left:450px;top:363px;width:53px;height:0.6px;background:#d0d0d0"></div>
<div class="ab" style="left:450px;top:363px;width:28px;height:0.8px;background:#555"></div>
<svg class="ab" style="left:475.5px;top:360.5px;" width="5" height="5" viewBox="0 0 5 5"><circle cx="2.5" cy="2.5" r="1.9" fill="#fff" stroke="#555" stroke-width="0.6"/></svg>
<svg class="ab" style="left:504.5px;top:361px;" width="5" height="5" viewBox="0 0 5 5"><path d="M2.5 0.3V4.7M0.3 2.5H4.7" stroke="#333" stroke-width="1"/></svg>
<svg class="ab" style="left:513px;top:360.5px;" width="6" height="6" viewBox="0 0 6 6"><path d="M0.5 2V0.5H2M4 0.5H5.5V2M5.5 4V5.5H4M2 5.5H0.5V4" stroke="#444" stroke-width="0.6" fill="none"/></svg>
<div class="ab" style="left:0px;top:404px;width:84.6px;height:9.8px;background:#1f2123"></div>
<svg class="ab" style="left:3px;top:405.5px;" width="7" height="7" viewBox="0 0 7 7"><rect x="0.5" y="0.5" width="6" height="4.5" fill="#eee"/><rect x="2.5" y="5.5" width="2" height="1" fill="#eee"/></svg>
<svg class="ab" style="left:11px;top:405px;" width="6" height="8" viewBox="0 0 6 8"><rect x="1.5" y="0.5" width="3" height="5" rx="1.5" fill="#d6d6d6"/><path d="M0.5 7.5L5.5 0.5" stroke="#e04848" stroke-width="0.8"/></svg>
<div class="t" style="left:18.5px;top:407px;font-size:6.4px;height:6.4px;color:#ececec;">起草组-崔演的屏幕共享</div>
<div class="ab" style="left:0px;top:414.2px;width:524px;height:1.8px;background:#efe9e6"></div>
<div class="ab" style="left:524px;top:14px;width:176px;height:402px;background:#fff"></div>
<div class="ab" style="left:524px;top:14px;width:176px;height:0.6px;background:#ececec"></div>
<svg class="ab" style="left:526.5px;top:17.5px;" width="7" height="7" viewBox="0 0 7 7"><circle cx="3.5" cy="2.2" r="1.6" fill="#8a8a8a"/><path d="M0.5 6.3A3 2.2 0 0 1 6.5 6.3Z" fill="#8a8a8a"/></svg>
<div class="t" style="left:535.5px;top:20px;font-size:5.6px;height:5.6px;color:#333;">管理成员</div>
<div class="ab" style="left:524px;top:27.8px;width:176px;height:0.6px;background:#ececec"></div>
<div class="ab" style="left:687.3px;top:14.3px;width:12.7px;height:13px;background:#f2f3f5;border:0.6px solid #e3e4e6;border-right:none"></div>
<svg class="ab" style="left:691px;top:18.5px;" width="5" height="5" viewBox="0 0 5 5"><path d="M0.3 1H4.2M0.3 2.5H4.2M0.3 4.2H4.2" stroke="#9a9a9a" stroke-width="0.7"/></svg>
<div class="ab" style="left:529.8px;top:33px;width:165px;height:13.5px;background:#fff;border:0.7px solid #dfe2e6;border-radius:2px"></div>
<svg class="ab" style="left:533.5px;top:36.5px;" width="7" height="7" viewBox="0 0 7 7"><circle cx="3" cy="3" r="2.1" fill="none" stroke="#555" stroke-width="0.8"/><path d="M4.6 4.6L6.2 6.2" stroke="#555" stroke-width="0.8"/></svg>
<div class="t" style="left:545px;top:39px;font-size:5.6px;height:5.6px;color:#9a9a9a;">搜索成员</div>
<div class="ab" style="left:569.2px;top:16.8px;width:113.8px;height:16px;background:#2b2d30;border-radius:2px"></div>
<svg class="ab" style="left:573.5px;top:21px;" width="8" height="8" viewBox="0 0 8 8"><path d="M2 7.5L6.5 0.5" stroke="#c04848" stroke-width="0.8"/><rect x="3" y="1.5" width="2.5" height="4" rx="1.2" fill="#888"/></svg>
<div class="ab" style="left:586px;top:19.5px;width:0.5px;height:10.5px;background:#444"></div>
<div class="t" style="left:590px;top:24px;font-size:5.6px;height:5.6px;color:#e8e8e8;">正在讲话：专家-王屹; 起...</div>
<svg class="ab" style="left:658px;top:18px;" width="18" height="14" viewBox="0 0 18 14"><path d="M0 8L5 2L9 6L4 12Z" fill="#3e4044"/><path d="M6 8L11 2L13 4L13 11L9 12Z" fill="#44474b"/></svg>
<svg class="ab" style="left:672.8px;top:21.5px;" width="7" height="6" viewBox="0 0 7 6"><path d="M0.5 3L3 0.5V2H4.5A2.5 2.5 0 0 1 6.5 5.8A2 2 0 0 0 4.5 4H3V5.5Z" fill="#a8a8a8"/></svg>
<div class="ab" style="left:525px;top:53px;width:87px;height:15px;background:#0b6cff;border-radius:1.5px 0 0 1.5px"></div>
<div class="t" style="left:555px;top:60px;font-size:5.6px;height:5.6px;color:#fff;">会议中(27)</div>
<div class="ab" style="left:612px;top:52.6px;width:86.6px;height:15.4px;background:#fff;border:0.7px solid #e8e8e8;border-left:none"></div>
<div class="t" style="left:646.5px;top:60px;font-size:5.6px;height:5.6px;color:#2a2a2a;">未入会</div>
<svg class="ab" style="left:532px;top:73.1px;" width="14" height="14" viewBox="0 0 14 14"><defs><clipPath id="av1"><circle cx="7" cy="7" r="7"/></clipPath></defs><g clip-path="url(#av1)"><rect width="14" height="14" fill="#1b2217"/><path d="M2.5 9.5L6 7L8 6.5L11.5 4.5L9.5 7.2L7 8.6L4.5 9.2Z" fill="#b9b8ad"/><path d="M5 8L7.5 6" stroke="#e6e6dd" stroke-width="0.7"/></g></svg>
<div class="t" style="left:551px;top:74px;font-size:5.8px;height:5.8px;color:#2a2a2a;">田靖</div>
<div class="t" style="left:551px;top:83px;font-size:5.6px;height:5.6px;color:#999;">(主持人, 我)</div>
<svg class="ab" style="left:661.8px;top:76.8px;" width="8" height="6" viewBox="0 0 8 6"><path d="M1.5 5.5H6.2A1.7 1.7 0 0 0 6.3 2.3A2.3 2.3 0 0 0 2 2.4A1.6 1.6 0 0 0 1.5 5.5Z" fill="#fff" stroke="#a0a0a0" stroke-width="0.65"/><circle cx="4.1" cy="3.9" r="1.05" fill="#d83c3c"/></svg>
<svg class="ab" style="left:673.5px;top:76.1px;" width="7" height="8" viewBox="0 0 7 8"><rect x="2.4" y="0.4" width="2.6" height="4.8" rx="1.3" fill="#c4c4c4"/><path d="M1.4 3.9A2.3 2.3 0 0 0 6 3.9M3.7 6.2V7.4" fill="none" stroke="#c4c4c4" stroke-width="0.6"/><path d="M0.6 7.6L6.8 0.8" stroke="#ea7a7a" stroke-width="0.75"/></svg>
<svg class="ab" style="left:685.0px;top:77.1px;" width="8" height="6" viewBox="0 0 8 6"><rect x="0" y="0.9" width="5.2" height="4.3" rx="0.5" fill="#c9c9c9"/><path d="M5.2 2.4L7.4 1.1V5L5.2 3.7Z" fill="#c9c9c9"/><path d="M0 5.6L5.3 0.4" stroke="#ee9a9a" stroke-width="0.6"/></svg>
<svg class="ab" style="left:532px;top:93.69999999999999px;" width="14" height="14" viewBox="0 0 14 14"><defs><clipPath id="av2"><circle cx="7" cy="7" r="7"/></clipPath></defs><g clip-path="url(#av2)"><rect width="14" height="14" fill="#ececec"/><path d="M5.8 3.5H8.2L9.6 10.8H4.4Z" fill="#e7c06a"/><circle cx="7" cy="6.8" r="1.1" fill="#9a6a2a"/><rect x="4.6" y="10" width="4.8" height="1.3" fill="#d8aa50"/></g></svg>
<div class="t" style="left:551px;top:100px;font-size:5.8px;height:5.8px;color:#2a2a2a;">起草组-谢象</div>
<svg class="ab" style="left:663px;top:97.3px;" width="6" height="6" viewBox="0 0 6 6"><rect x="0.3" y="0.3" width="5.4" height="4" fill="#c6c6c6"/><rect x="1.1" y="1" width="3.8" height="2.5" fill="#f2f2f2"/><rect x="2.3" y="4.3" width="1.4" height="1.2" fill="#c6c6c6"/></svg>
<svg class="ab" style="left:673.5px;top:96.69999999999999px;" width="7" height="8" viewBox="0 0 7 8"><rect x="2.4" y="0.4" width="2.6" height="4.8" rx="1.3" fill="#c4c4c4"/><path d="M1.4 3.9A2.3 2.3 0 0 0 6 3.9M3.7 6.2V7.4" fill="none" stroke="#c4c4c4" stroke-width="0.6"/><path d="M0.6 7.6L6.8 0.8" stroke="#ea7a7a" stroke-width="0.75"/></svg>
<svg class="ab" style="left:685.0px;top:97.69999999999999px;" width="8" height="6" viewBox="0 0 8 6"><rect x="0" y="0.9" width="5.2" height="4.3" rx="0.5" fill="#c9c9c9"/><path d="M5.2 2.4L7.4 1.1V5L5.2 3.7Z" fill="#c9c9c9"/><path d="M0 5.6L5.3 0.4" stroke="#ee9a9a" stroke-width="0.6"/></svg>
<svg class="ab" style="left:532px;top:114.3px;" width="14" height="14" viewBox="0 0 14 14"><circle cx="7" cy="7" r="7" fill="#1677f5"/></svg>
<div class="t" style="left:533.6px;top:121px;font-size:5.4px;height:5.4px;color:#fff;">永盛</div>
<div class="t" style="left:553px;top:120px;font-size:5.8px;height:5.8px;color:#2a2a2a;">专家-卢永盛</div>
<svg class="ab" style="left:673.5px;top:117.3px;" width="7" height="8" viewBox="0 0 7 8"><rect x="2.2" y="0.4" width="2.6" height="4.8" rx="1.3" fill="#c0c0c0"/><path d="M1.2 3.9A2.3 2.3 0 0 0 5.8 3.9M3.5 6.2V7.4" fill="none" stroke="#c0c0c0" stroke-width="0.6"/></svg>
<svg class="ab" style="left:685.0px;top:118.3px;" width="8" height="6" viewBox="0 0 8 6"><rect x="0" y="0.9" width="5.2" height="4.3" rx="0.5" fill="#c9c9c9"/><path d="M5.2 2.4L7.4 1.1V5L5.2 3.7Z" fill="#c9c9c9"/><path d="M0 5.6L5.3 0.4" stroke="#ee9a9a" stroke-width="0.6"/></svg>
<svg class="ab" style="left:532px;top:134.9px;" width="14" height="14" viewBox="0 0 14 14"><defs><clipPath id="av4"><circle cx="7" cy="7" r="7"/></clipPath></defs><g clip-path="url(#av4)"><rect width="14" height="14" fill="#8e857f"/><rect x="0" y="0" width="6" height="14" fill="#b1aaa3"/><path d="M1.5 3V11M3.5 2V12" stroke="#676058" stroke-width="0.6"/><rect x="9.5" y="0" width="4.5" height="10" fill="#5e2f2c"/><rect x="6" y="8" width="2.5" height="6" fill="#2c2826"/></g></svg>
<div class="t" style="left:553px;top:141px;font-size:5.8px;height:5.8px;color:#2a2a2a;">专家-王屹</div>
<svg class="ab" style="left:673.5px;top:137.9px;" width="7" height="8" viewBox="0 0 7 8"><rect x="2.2" y="0.4" width="2.6" height="4.8" rx="1.3" fill="#4cbb5a"/><path d="M1.2 3.9A2.3 2.3 0 0 0 5.8 3.9M3.5 6.2V7.4" fill="none" stroke="#4cbb5a" stroke-width="0.6"/></svg>
<svg class="ab" style="left:685.0px;top:138.9px;" width="8" height="6" viewBox="0 0 8 6"><rect x="0" y="0.9" width="5.2" height="4.3" rx="0.5" fill="#c9c9c9"/><path d="M5.2 2.4L7.4 1.1V5L5.2 3.7Z" fill="#c9c9c9"/><path d="M0 5.6L5.3 0.4" stroke="#ee9a9a" stroke-width="0.6"/></svg>
<svg class="ab" style="left:532px;top:155.5px;" width="14" height="14" viewBox="0 0 14 14"><defs><clipPath id="av5"><circle cx="7" cy="7" r="7"/></clipPath></defs><g clip-path="url(#av5)"><rect width="14" height="14" fill="#16161b"/><path d="M2.5 11.5L8.5 7.5" stroke="#c9864a" stroke-width="1.1"/><circle cx="10" cy="4" r="1" fill="#5a5a60"/></g></svg>
<div class="t" style="left:553px;top:162px;font-size:5.8px;height:5.8px;color:#2a2a2a;">专家-张晓东-北京交通大学</div>
<svg class="ab" style="left:673.5px;top:158.5px;" width="7" height="8" viewBox="0 0 7 8"><rect x="2.2" y="0.4" width="2.6" height="4.8" rx="1.3" fill="#c0c0c0"/><path d="M1.2 3.9A2.3 2.3 0 0 0 5.8 3.9M3.5 6.2V7.4" fill="none" stroke="#c0c0c0" stroke-width="0.6"/></svg>
<svg class="ab" style="left:685.0px;top:159.5px;" width="8" height="6" viewBox="0 0 8 6"><rect x="0" y="0.9" width="5.2" height="4.3" rx="0.5" fill="#c9c9c9"/><path d="M5.2 2.4L7.4 1.1V5L5.2 3.7Z" fill="#c9c9c9"/><path d="M0 5.6L5.3 0.4" stroke="#ee9a9a" stroke-width="0.6"/></svg>
<svg class="ab" style="left:532px;top:176.1px;" width="14" height="14" viewBox="0 0 14 14"><circle cx="7" cy="7" r="7" fill="#1677f5"/></svg>
<div class="t" style="left:533.6px;top:182px;font-size:5.4px;height:5.4px;color:#fff;">婷婷</div>
<div class="t" style="left:551px;top:182px;font-size:5.8px;height:5.8px;color:#2a2a2a;">起草组主讲人美团-武婷婷</div>
<svg class="ab" style="left:673.5px;top:179.1px;" width="7" height="8" viewBox="0 0 7 8"><rect x="2.2" y="0.4" width="2.6" height="4.8" rx="1.3" fill="#c0c0c0"/><path d="M1.2 3.9A2.3 2.3 0 0 0 5.8 3.9M3.5 6.2V7.4" fill="none" stroke="#c0c0c0" stroke-width="0.6"/></svg>
<svg class="ab" style="left:685.0px;top:180.1px;" width="8" height="6" viewBox="0 0 8 6"><rect x="0" y="0.9" width="5.2" height="4.3" rx="0.5" fill="#c9c9c9"/><path d="M5.2 2.4L7.4 1.1V5L5.2 3.7Z" fill="#c9c9c9"/><path d="M0 5.6L5.3 0.4" stroke="#ee9a9a" stroke-width="0.6"/></svg>
<svg class="ab" style="left:532px;top:196.7px;" width="14" height="14" viewBox="0 0 14 14"><circle cx="7" cy="7" r="7" fill="#1677f5"/></svg>
<div class="t" style="left:533.6px;top:203px;font-size:5.4px;height:5.4px;color:#fff;">婷婷</div>
<div class="t" style="left:551px;top:203px;font-size:5.8px;height:5.8px;color:#2a2a2a;">起草组主讲人美团-武婷婷</div>
<svg class="ab" style="left:673.5px;top:199.7px;" width="7" height="8" viewBox="0 0 7 8"><rect x="2.4" y="0.4" width="2.6" height="4.8" rx="1.3" fill="#c4c4c4"/><path d="M1.4 3.9A2.3 2.3 0 0 0 6 3.9M3.7 6.2V7.4" fill="none" stroke="#c4c4c4" stroke-width="0.6"/><path d="M0.6 7.6L6.8 0.8" stroke="#ea7a7a" stroke-width="0.75"/></svg>
<svg class="ab" style="left:685.0px;top:200.7px;" width="8" height="6" viewBox="0 0 8 6"><rect x="0" y="0.9" width="5.2" height="4.3" rx="0.5" fill="#c9c9c9"/><path d="M5.2 2.4L7.4 1.1V5L5.2 3.7Z" fill="#c9c9c9"/><path d="M0 5.6L5.3 0.4" stroke="#ee9a9a" stroke-width="0.6"/></svg>
<svg class="ab" style="left:532px;top:217.3px;" width="14" height="14" viewBox="0 0 14 14"><defs><clipPath id="av8"><circle cx="7" cy="7" r="7"/></clipPath></defs><g clip-path="url(#av8)"><rect width="14" height="14" fill="#b88c66"/><path d="M3 3Q7 0 11 3V14H3Z" fill="#dcc2a0"/><path d="M5.2 4.5H8.8V14H5.2Z" fill="#f2e8dc"/><rect x="0" y="0" width="2.5" height="14" fill="#9a6a48"/><rect x="11.5" y="0" width="2.5" height="14" fill="#c8a888"/></g></svg>
<div class="t" style="left:553px;top:223px;font-size:5.8px;height:5.8px;color:#2a2a2a;">起草组-郑红霞</div>
<svg class="ab" style="left:673.5px;top:220.3px;" width="7" height="8" viewBox="0 0 7 8"><rect x="2.4" y="0.4" width="2.6" height="4.8" rx="1.3" fill="#c4c4c4"/><path d="M1.4 3.9A2.3 2.3 0 0 0 6 3.9M3.7 6.2V7.4" fill="none" stroke="#c4c4c4" stroke-width="0.6"/><path d="M0.6 7.6L6.8 0.8" stroke="#ea7a7a" stroke-width="0.75"/></svg>
<svg class="ab" style="left:685.0px;top:221.3px;" width="8" height="6" viewBox="0 0 8 6"><rect x="0" y="0.9" width="5.2" height="4.3" rx="0.5" fill="#c9c9c9"/><path d="M5.2 2.4L7.4 1.1V5L5.2 3.7Z" fill="#c9c9c9"/><path d="M0 5.6L5.3 0.4" stroke="#ee9a9a" stroke-width="0.6"/></svg>
<svg class="ab" style="left:532px;top:237.9px;" width="14" height="14" viewBox="0 0 14 14"><defs><clipPath id="av9"><circle cx="7" cy="7" r="7"/></clipPath></defs><g clip-path="url(#av9)"><rect width="14" height="14" fill="#b7c4cf"/><path d="M4 7.5Q7 6 10 7.5L10.5 14H3.5Z" fill="#e0404e"/><circle cx="6.5" cy="4.5" r="1.8" fill="#2a2020"/><rect x="3" y="11.5" width="8" height="2.5" fill="#30303a"/></g></svg>
<div class="t" style="left:553px;top:244px;font-size:5.8px;height:5.8px;color:#2a2a2a;">专家-王菡</div>
<svg class="ab" style="left:673.5px;top:240.9px;" width="7" height="8" viewBox="0 0 7 8"><rect x="2.4" y="0.4" width="2.6" height="4.8" rx="1.3" fill="#c4c4c4"/><path d="M1.4 3.9A2.3 2.3 0 0 0 6 3.9M3.7 6.2V7.4" fill="none" stroke="#c4c4c4" stroke-width="0.6"/><path d="M0.6 7.6L6.8 0.8" stroke="#ea7a7a" stroke-width="0.75"/></svg>
<svg class="ab" style="left:685.0px;top:241.9px;" width="8" height="6" viewBox="0 0 8 6"><rect x="0" y="0.9" width="5.2" height="4.3" rx="0.5" fill="#c9c9c9"/><path d="M5.2 2.4L7.4 1.1V5L5.2 3.7Z" fill="#c9c9c9"/><path d="M0 5.6L5.3 0.4" stroke="#ee9a9a" stroke-width="0.6"/></svg>
<svg class="ab" style="left:532px;top:258.5px;" width="14" height="14" viewBox="0 0 14 14"><defs><clipPath id="av10"><circle cx="7" cy="7" r="7"/></clipPath></defs><g clip-path="url(#av10)"><rect width="14" height="14" fill="#f2f0ec"/><path d="M0 0H14V5.5Q7 3.5 0 5.5Z" fill="#1e1a18"/><path d="M0 4L3 6V14H0Z" fill="#1e1a18"/><ellipse cx="7" cy="6.3" rx="2.8" ry="2.3" fill="#8a5a48"/><rect x="9.5" y="10" width="4.5" height="4" fill="#e07070"/></g></svg>
<div class="t" style="left:553px;top:265px;font-size:5.8px;height:5.8px;color:#2a2a2a;">专家-庞忠</div>
<svg class="ab" style="left:673.5px;top:261.5px;" width="7" height="8" viewBox="0 0 7 8"><rect x="2.4" y="0.4" width="2.6" height="4.8" rx="1.3" fill="#c4c4c4"/><path d="M1.4 3.9A2.3 2.3 0 0 0 6 3.9M3.7 6.2V7.4" fill="none" stroke="#c4c4c4" stroke-width="0.6"/><path d="M0.6 7.6L6.8 0.8" stroke="#ea7a7a" stroke-width="0.75"/></svg>
<svg class="ab" style="left:685.0px;top:262.5px;" width="8" height="6" viewBox="0 0 8 6"><rect x="0" y="0.9" width="5.2" height="4.3" rx="0.5" fill="#c9c9c9"/><path d="M5.2 2.4L7.4 1.1V5L5.2 3.7Z" fill="#c9c9c9"/><path d="M0 5.6L5.3 0.4" stroke="#ee9a9a" stroke-width="0.6"/></svg>
<svg class="ab" style="left:532px;top:279.1px;" width="14" height="14" viewBox="0 0 14 14"><defs><clipPath id="av11"><circle cx="7" cy="7" r="7"/></clipPath></defs><g clip-path="url(#av11)"><rect width="14" height="14" fill="#b59a55"/><rect x="0" y="0" width="14" height="5" fill="#c6d0d2"/><rect x="6" y="0" width="3" height="6" fill="#eef2f2"/><rect x="3" y="6" width="2" height="8" fill="#4a4030"/><rect x="9.5" y="5" width="1.5" height="9" fill="#5a4a30"/><rect x="1" y="8" width="3" height="3" fill="#e8d060"/></g></svg>
<div class="t" style="left:553px;top:285px;font-size:5.8px;height:5.8px;color:#2a2a2a;">专家-江国强</div>
<svg class="ab" style="left:673.5px;top:282.1px;" width="7" height="8" viewBox="0 0 7 8"><rect x="2.4" y="0.4" width="2.6" height="4.8" rx="1.3" fill="#c4c4c4"/><path d="M1.4 3.9A2.3 2.3 0 0 0 6 3.9M3.7 6.2V7.4" fill="none" stroke="#c4c4c4" stroke-width="0.6"/><path d="M0.6 7.6L6.8 0.8" stroke="#ea7a7a" stroke-width="0.75"/></svg>
<svg class="ab" style="left:685.0px;top:283.1px;" width="8" height="6" viewBox="0 0 8 6"><rect x="0" y="0.9" width="5.2" height="4.3" rx="0.5" fill="#c9c9c9"/><path d="M5.2 2.4L7.4 1.1V5L5.2 3.7Z" fill="#c9c9c9"/><path d="M0 5.6L5.3 0.4" stroke="#ee9a9a" stroke-width="0.6"/></svg>
<svg class="ab" style="left:532px;top:299.70000000000005px;" width="14" height="14" viewBox="0 0 14 14"><defs><clipPath id="av12"><circle cx="7" cy="7" r="7"/></clipPath></defs><g clip-path="url(#av12)"><rect width="14" height="14" fill="#2f9ee0"/><rect x="0" y="6.8" width="14" height="1.2" fill="#d8e8e0"/><rect x="0" y="8" width="14" height="6" fill="#5c9a48"/></g></svg>
<div class="t" style="left:553px;top:306px;font-size:5.8px;height:5.8px;color:#2a2a2a;">专家-刘伟华</div>
<svg class="ab" style="left:673.5px;top:302.70000000000005px;" width="7" height="8" viewBox="0 0 7 8"><rect x="2.4" y="0.4" width="2.6" height="4.8" rx="1.3" fill="#c4c4c4"/><path d="M1.4 3.9A2.3 2.3 0 0 0 6 3.9M3.7 6.2V7.4" fill="none" stroke="#c4c4c4" stroke-width="0.6"/><path d="M0.6 7.6L6.8 0.8" stroke="#ea7a7a" stroke-width="0.75"/></svg>
<svg class="ab" style="left:685.0px;top:303.70000000000005px;" width="8" height="6" viewBox="0 0 8 6"><rect x="0" y="0.9" width="5.2" height="4.3" rx="0.5" fill="#c9c9c9"/><path d="M5.2 2.4L7.4 1.1V5L5.2 3.7Z" fill="#c9c9c9"/><path d="M0 5.6L5.3 0.4" stroke="#ee9a9a" stroke-width="0.6"/></svg>
<svg class="ab" style="left:532px;top:320.3px;" width="14" height="14" viewBox="0 0 14 14"><defs><clipPath id="av13"><circle cx="7" cy="7" r="7"/></clipPath></defs><g clip-path="url(#av13)"><rect width="14" height="14" fill="#d4d8d6"/><rect x="2.5" y="1" width="1.6" height="8" fill="#2a3230"/><path d="M7 14L8.5 5L12 3L14 6V14Z" fill="#1c2220"/><path d="M0 11L6 9.5L8 14H0Z" fill="#262c2a"/></g></svg>
<div class="t" style="left:553px;top:326px;font-size:5.8px;height:5.8px;color:#2a2a2a;">专家-牟屹东</div>
<svg class="ab" style="left:673.5px;top:323.3px;" width="7" height="8" viewBox="0 0 7 8"><rect x="2.4" y="0.4" width="2.6" height="4.8" rx="1.3" fill="#c4c4c4"/><path d="M1.4 3.9A2.3 2.3 0 0 0 6 3.9M3.7 6.2V7.4" fill="none" stroke="#c4c4c4" stroke-width="0.6"/><path d="M0.6 7.6L6.8 0.8" stroke="#ea7a7a" stroke-width="0.75"/></svg>
<svg class="ab" style="left:685.0px;top:324.3px;" width="8" height="6" viewBox="0 0 8 6"><rect x="0" y="0.9" width="5.2" height="4.3" rx="0.5" fill="#c9c9c9"/><path d="M5.2 2.4L7.4 1.1V5L5.2 3.7Z" fill="#c9c9c9"/><path d="M0 5.6L5.3 0.4" stroke="#ee9a9a" stroke-width="0.6"/></svg>
<svg class="ab" style="left:532px;top:340.9px;" width="14" height="14" viewBox="0 0 14 14"><defs><clipPath id="av14"><circle cx="7" cy="7" r="7"/></clipPath></defs><g clip-path="url(#av14)"><rect width="14" height="14" fill="#f4f4f4"/><path d="M1.5 9Q1 1 7 1Q13 1 12.5 9L11.5 6Q7 3.5 2.5 6Z" fill="#151515"/><ellipse cx="7" cy="8.8" rx="4.3" ry="4" fill="#f6dcc0"/><path d="M2.8 6Q7 2.8 11.2 6L10.5 4.5Q7 2 3.5 4.5Z" fill="#151515"/><circle cx="5.3" cy="8.3" r="0.7" fill="#222"/><circle cx="8.7" cy="8.3" r="0.7" fill="#222"/></g></svg>
<div class="t" style="left:553px;top:347px;font-size:5.8px;height:5.8px;color:#2a2a2a;">专家-姚婷静</div>
<svg class="ab" style="left:673.5px;top:343.9px;" width="7" height="8" viewBox="0 0 7 8"><rect x="2.4" y="0.4" width="2.6" height="4.8" rx="1.3" fill="#c4c4c4"/><path d="M1.4 3.9A2.3 2.3 0 0 0 6 3.9M3.7 6.2V7.4" fill="none" stroke="#c4c4c4" stroke-width="0.6"/><path d="M0.6 7.6L6.8 0.8" stroke="#ea7a7a" stroke-width="0.75"/></svg>
<svg class="ab" style="left:685.0px;top:344.9px;" width="8" height="6" viewBox="0 0 8 6"><rect x="0" y="0.9" width="5.2" height="4.3" rx="0.5" fill="#c9c9c9"/><path d="M5.2 2.4L7.4 1.1V5L5.2 3.7Z" fill="#c9c9c9"/><path d="M0 5.6L5.3 0.4" stroke="#ee9a9a" stroke-width="0.6"/></svg>
<svg class="ab" style="left:532px;top:361.5px;" width="14" height="14" viewBox="0 0 14 14"><defs><clipPath id="av15"><circle cx="7" cy="7" r="7"/></clipPath></defs><g clip-path="url(#av15)"><rect width="14" height="14" fill="#1e2b47"/><ellipse cx="7" cy="6.5" rx="3.2" ry="3.8" fill="#e4c6b6"/><path d="M4.5 11L7 10L9.5 11L10 14H4Z" fill="#f0f0f4"/><path d="M3 4Q7 0.5 11 4L10 3Q7 2 4 3Z" fill="#c8b0a0"/></g></svg>
<div class="t" style="left:553px;top:368px;font-size:5.8px;height:5.8px;color:#2a2a2a;">专家-樊俊</div>
<svg class="ab" style="left:673.5px;top:364.5px;" width="7" height="8" viewBox="0 0 7 8"><rect x="2.4" y="0.4" width="2.6" height="4.8" rx="1.3" fill="#c4c4c4"/><path d="M1.4 3.9A2.3 2.3 0 0 0 6 3.9M3.7 6.2V7.4" fill="none" stroke="#c4c4c4" stroke-width="0.6"/><path d="M0.6 7.6L6.8 0.8" stroke="#ea7a7a" stroke-width="0.75"/></svg>
<svg class="ab" style="left:685.0px;top:365.5px;" width="8" height="6" viewBox="0 0 8 6"><rect x="0" y="0.9" width="5.2" height="4.3" rx="0.5" fill="#c9c9c9"/><path d="M5.2 2.4L7.4 1.1V5L5.2 3.7Z" fill="#c9c9c9"/><path d="M0 5.6L5.3 0.4" stroke="#ee9a9a" stroke-width="0.6"/></svg>
<svg class="ab" style="left:532px;top:382.1px;" width="14" height="14" viewBox="0 0 14 14"><defs><clipPath id="av16"><circle cx="7" cy="7" r="7"/></clipPath></defs><g clip-path="url(#av16)"><rect width="14" height="14" fill="#5d92d2"/><path d="M0 8.5L3 7.5L5 8.5L9 7L14 8V14H0Z" fill="#3b4b5c"/><rect x="2" y="8.5" width="3" height="2" fill="#c8d0d8"/></g></svg>
<div class="t" style="left:553px;top:388px;font-size:5.8px;height:5.8px;color:#2a2a2a;">专家-赵你来</div>
<svg class="ab" style="left:673.5px;top:385.1px;" width="7" height="8" viewBox="0 0 7 8"><rect x="2.4" y="0.4" width="2.6" height="4.8" rx="1.3" fill="#c4c4c4"/><path d="M1.4 3.9A2.3 2.3 0 0 0 6 3.9M3.7 6.2V7.4" fill="none" stroke="#c4c4c4" stroke-width="0.6"/><path d="M0.6 7.6L6.8 0.8" stroke="#ea7a7a" stroke-width="0.75"/></svg>
<svg class="ab" style="left:685.0px;top:386.1px;" width="8" height="6" viewBox="0 0 8 6"><rect x="0" y="0.9" width="5.2" height="4.3" rx="0.5" fill="#c9c9c9"/><path d="M5.2 2.4L7.4 1.1V5L5.2 3.7Z" fill="#c9c9c9"/><path d="M0 5.6L5.3 0.4" stroke="#ee9a9a" stroke-width="0.6"/></svg>
<div class="ab" style="left:524px;top:392.4px;width:176px;height:23.6px;background:#fff;border-top:0.6px solid #ececec"></div>
<div class="ab" style="left:553.4px;top:396.6px;width:34.6px;height:14.9px;background:#fff;border:0.7px solid #e2e4e8;border-radius:2px"></div>
<div class="t" style="left:559.5px;top:403px;font-size:5.6px;height:5.6px;color:#2a2a2a;">全体静音</div>
<div class="ab" style="left:591px;top:396.6px;width:41.6px;height:14.9px;background:#fff;border:0.7px solid #e2e4e8;border-radius:2px"></div>
<div class="t" style="left:595.0px;top:403px;font-size:5.6px;height:5.6px;color:#2a2a2a;">解除全体静音</div>
<div class="ab" style="left:636.5px;top:396.6px;width:33.1px;height:14.9px;background:#fff;border:0.7px solid #e2e4e8;border-radius:2px"></div>
<div class="t" style="left:642.5px;top:403px;font-size:5.6px;height:5.6px;color:#2a2a2a;">更多</div>
<svg class="ab" style="left:658px;top:402.7px;" width="4" height="3" viewBox="0 0 4 3"><path d="M0 0H4L2 2.5Z" fill="#555"/></svg>
<div class="ab" style="left:524px;top:414.2px;width:176px;height:1.8px;background:#efe9e6"></div>
</body></html>
